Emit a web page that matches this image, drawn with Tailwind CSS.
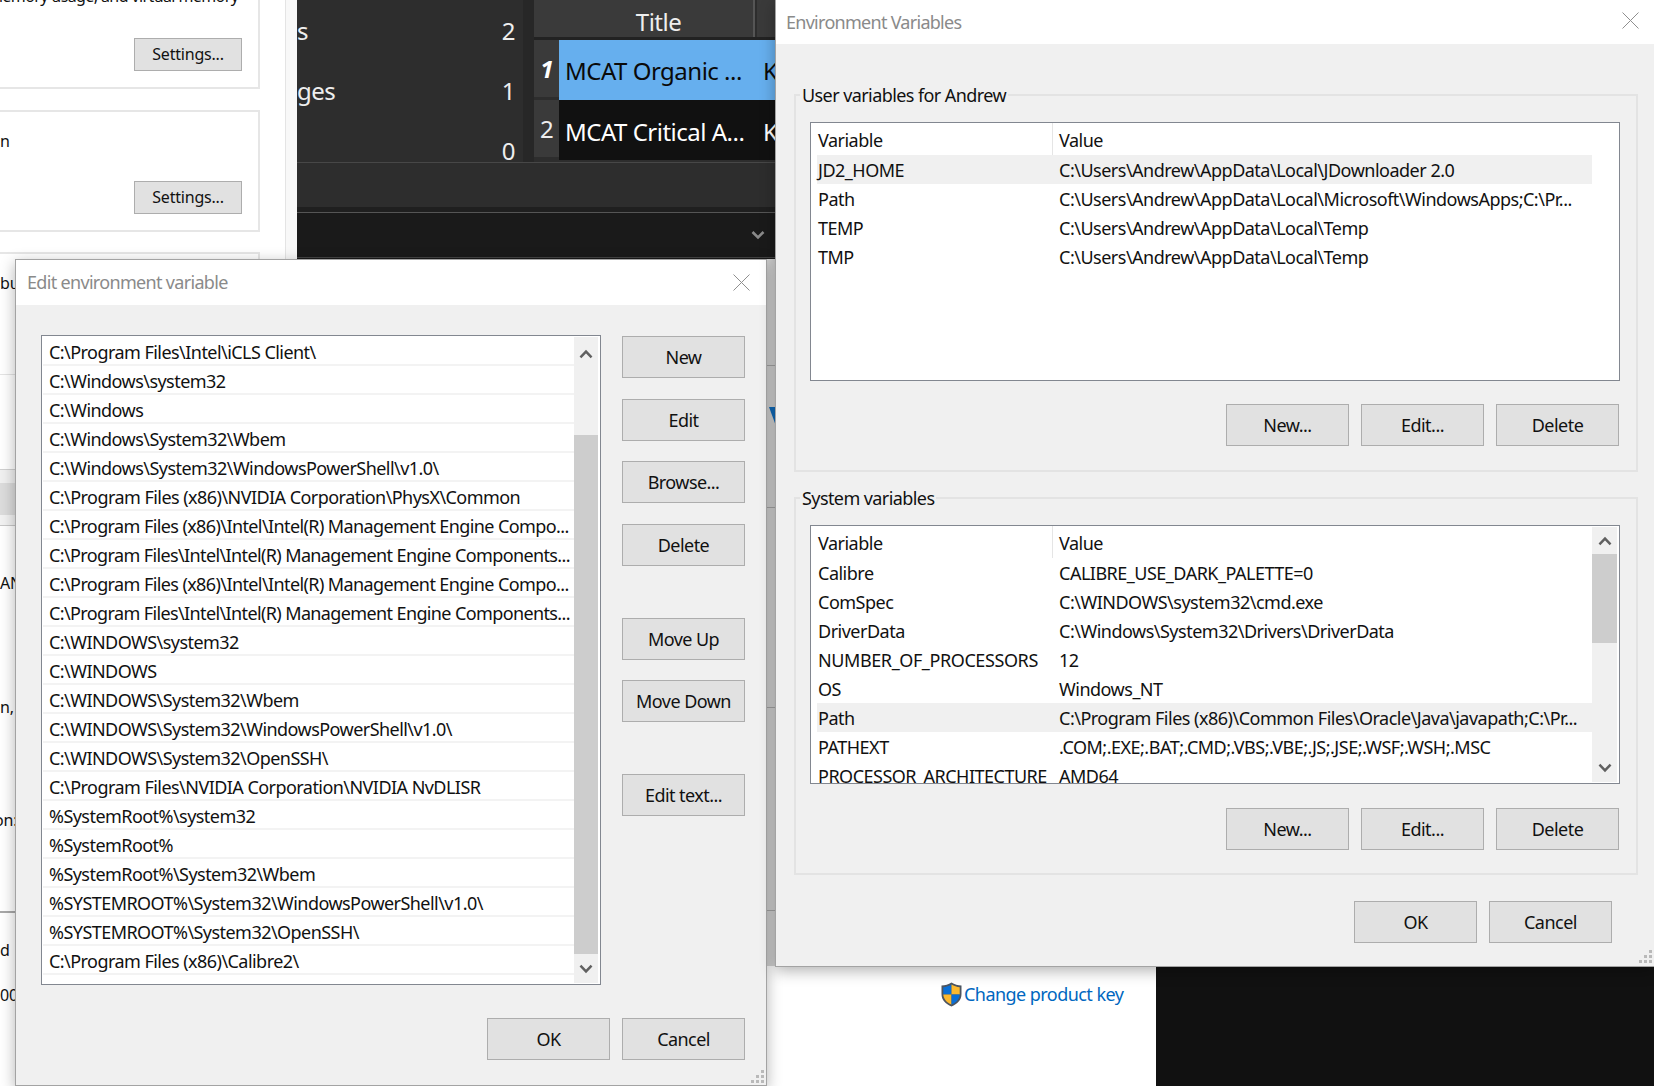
<!DOCTYPE html>
<html>
<head>
<meta charset="utf-8">
<script src="https://cdn.jsdelivr.net/npm/@tailwindcss/browser@4"></script>
</head>
<body class="m-0">
<div class="relative w-[1654px] h-[1086px] overflow-hidden bg-white font-['Noto_Sans',sans-serif] text-[18px] leading-[29px] tracking-[-0.55px] text-[#111]">

  <!-- Background: system settings window, left -->
  <div class="absolute left-0 top-0 w-[297px] h-[1086px] flex flex-col overflow-hidden bg-[#f8f8f8] text-[16px] tracking-[-0.2px]">
    <div class="w-[286px] h-full bg-white border-r border-[#e4e4e4] flex flex-col">
      <div class="w-[260px] h-[89px] border-r-2 border-b-2 border-[#e6e6e6] overflow-hidden flex flex-col items-end">
        <p class="self-start h-[20px] -mt-[16px] mb-[34px] -ml-[12px] whitespace-nowrap leading-[24px] tracking-[-0.6px]">memory usage, and virtual memory</p>
        <button class="w-[108px] h-[33px] mr-[16px] bg-[#e1e1e1] border border-[#adadad]">Settings...</button>
      </div>
      <div class="w-[260px] h-[122px] mt-[21px] border-t-2 border-r-2 border-b-2 border-[#e6e6e6] flex flex-col items-end">
        <p class="self-start mt-[17px] leading-[24px]">n</p>
        <button class="w-[108px] h-[33px] mr-[16px] mt-[28px] bg-[#e1e1e1] border border-[#adadad]">Settings...</button>
      </div>
      <div class="w-[260px] h-[123px] mt-[20px] border-t-2 border-r-2 border-[#e6e6e6] border-b border-b-[#e4e4e4] pt-[17px]">
        <p class="leading-[24px]">bu</p>
      </div>
      <div class="mt-[94px] h-[14px] bg-[#f0f0f0] border-t border-[#d0d0d0]"></div>
      <div class="h-[32px] bg-[#dcdcdc]"></div>
      <div class="h-[11px] bg-[#f2f2f2] border-b border-[#c8c8c8]"></div>
      <p class="mt-[45px] h-[24px] leading-[24px]">AN</p>
      <p class="mt-[100px] h-[24px] leading-[24px]">n,</p>
      <p class="mt-[89px] h-[24px] -ml-[6px] leading-[24px]">on:</p>
      <div class="mt-[79px] h-[2px] bg-[#a8a8a8]"></div>
      <p class="mt-[25px] h-[24px] leading-[24px]">d</p>
      <p class="mt-[21px] h-[24px] leading-[24px]">000</p>
    </div>
  </div>

  <!-- Background: dark library window -->
  <div class="absolute left-[297px] top-0 w-[478px] h-[259px] bg-[#1a1a1a] overflow-hidden flex flex-col text-[24px] tracking-[-0.5px] text-[#eee]">
    <div class="h-[163px] flex bg-[#2d2d2d] border-b border-[#474747] overflow-hidden shrink-0">
      <div class="w-[226px] pr-[8px] shrink-0">
        <div class="h-[60px] flex items-center justify-between"><span>s</span><span>2</span></div>
        <div class="h-[60px] flex items-center justify-between"><span>ges</span><span>1</span></div>
        <div class="h-[60px] flex items-center justify-end"><span>0</span></div>
      </div>
      <div class="w-[11px] bg-[#272727] shrink-0"></div>
      <div class="w-[241px] shrink-0 flex flex-col">
        <div class="h-[37px] flex shrink-0">
          <div class="w-[221px] h-full bg-[#3a3a3a] border-r-2 border-[#555] text-center leading-[44px] pl-[30px]">Title</div>
          <div class="flex-1 ml-[2px] bg-[#3a3a3a]"></div>
        </div>
        <div class="h-[3px] bg-[#222] shrink-0"></div>
        <div class="h-[60px] flex shrink-0">
          <div class="w-[25px] h-[57px] bg-[#3a3a3a] flex items-center justify-center font-bold italic text-white">1</div>
          <div class="flex-1 bg-[#66afee] text-[#0a0a0a] flex items-center pl-[6px] pt-[1px] whitespace-nowrap overflow-hidden"><span class="w-[198px] shrink-0">MCAT Organic ...</span><span>K</span></div>
        </div>
        <div class="h-[60px] flex shrink-0">
          <div class="w-[25px] h-[57px] bg-[#3a3a3a] flex items-center justify-center text-[#eee]">2</div>
          <div class="flex-1 bg-[#111] text-white flex items-center pl-[6px] pt-[2px] whitespace-nowrap overflow-hidden"><span class="w-[198px] shrink-0">MCAT Critical A...</span><span>K</span></div>
        </div>
      </div>
    </div>
    <div class="h-[44px] bg-[#2d2d2d] shrink-0"></div>
    <div class="h-[5px] bg-[#1f1f1f] shrink-0"></div>
    <div class="h-[46px] bg-[#1a1a1a] border-t border-[#555] border-b border-b-[#444] flex items-center justify-end pr-[10px] shrink-0">
      <svg class="w-[14px] h-[10px]" viewBox="0 0 14 10" fill="none" stroke="#8a8a8a" stroke-width="2.6"><path d="M1.5 2 7 7.5 12.5 2"/></svg>
    </div>
  </div>

  <!-- Strip of another window, between the two dialogs -->
  <div class="absolute left-[767px] top-[259px] w-[9px] h-[707px] bg-[#d6d6d6] flex flex-col">
    <div class="mt-[106px] h-[1px] bg-[#a8a8a8]"></div>
    <svg class="ml-[2px] mt-[41px] w-[7px] h-[19px]" viewBox="0 0 7 19"><path d="M0 0H7V19Z" fill="#0f6cbd"/></svg>
    <div class="mt-[81px] h-[1px] bg-[#a8a8a8]"></div>
    <div class="mt-[199px] h-[1px] bg-[#a8a8a8]"></div>
    <div class="mt-[202px] h-[1px] bg-[#a8a8a8]"></div>
  </div>

  <!-- Bottom right: black area and product key link -->
  <div class="absolute left-[1156px] top-[966px] w-[498px] h-[120px] bg-[#111]"></div>
  <div class="absolute left-[940px] top-[980px] flex items-center gap-[1px] text-[#0067c0]">
    <svg class="w-[23px] h-[25px]" viewBox="0 0 22 25">
      <path d="M11 .5C8 2.500 4.500 3.500 1 3.500V12c0 6 4 10 10 12.500C17 22 21 18 21 12V3.500C17.500 3.500 14 2.500 11 .5Z" fill="#4d5560"/>
      <path d="M11 2.500C8.500 4 5.500 5 2.800 5.200V12.500H11Z" fill="#0a6fd6"/>
      <path d="M11 2.500C13.500 4 16.500 5 19.200 5.200V12.500H11Z" fill="#fdb92e"/>
      <path d="M2.800 12.500H11V22.500C6 20.500 3.200 17 2.800 12.500Z" fill="#fdb92e"/>
      <path d="M19.200 12.500H11V22.500C16 20.500 18.800 17 19.200 12.500Z" fill="#0a6fd6"/>
    </svg>
    <span class="whitespace-nowrap">Change product key</span>
  </div>

  <!-- Edit environment variable dialog -->
  <div class="absolute left-[15px] top-[259px] w-[752px] h-[827px] flex flex-col bg-[#f0f0f0] border border-[#a3a3a3] shadow-[0_4px_14px_rgba(0,0,0,0.3)]">
    <div class="h-[45px] bg-white shrink-0 flex items-center justify-between pl-[11px] pr-[16px] text-[#8a8a8a] tracking-[-0.68px]">
      <span>Edit environment variable</span>
      <svg class="w-[17px] h-[17px]" viewBox="0 0 17 17" fill="none" stroke="#8f8f8f" stroke-width="1"><path d="M.5.500 16.500 16.500M16.500.500 .5 16.500"/></svg>
    </div>
    <div class="relative flex-1 flex flex-col pt-[30px] pl-[25px]">
      <div class="flex gap-[21px]">
        <div class="w-[560px] h-[650px] bg-white border border-[#828790] flex overflow-hidden pl-[1px] pt-[1px]">
          <div class="flex-1 min-w-0 flex flex-col whitespace-nowrap leading-[31px]">
            <div class="h-[29px] shrink-0 border-b-2 border-[#f3f3f3] pl-[6px]">C:\Program Files\Intel\iCLS Client\</div>
            <div class="h-[29px] shrink-0 border-b-2 border-[#f3f3f3] pl-[6px]">C:\Windows\system32</div>
            <div class="h-[29px] shrink-0 border-b-2 border-[#f3f3f3] pl-[6px]">C:\Windows</div>
            <div class="h-[29px] shrink-0 border-b-2 border-[#f3f3f3] pl-[6px]">C:\Windows\System32\Wbem</div>
            <div class="h-[29px] shrink-0 border-b-2 border-[#f3f3f3] pl-[6px]">C:\Windows\System32\WindowsPowerShell\v1.0\</div>
            <div class="h-[29px] shrink-0 border-b-2 border-[#f3f3f3] pl-[6px]">C:\Program Files (x86)\NVIDIA Corporation\PhysX\Common</div>
            <div class="h-[29px] shrink-0 border-b-2 border-[#f3f3f3] pl-[6px] tracking-[-0.6px]">C:\Program Files (x86)\Intel\Intel(R) Management Engine Compo...</div>
            <div class="h-[29px] shrink-0 border-b-2 border-[#f3f3f3] pl-[6px] tracking-[-0.62px]">C:\Program Files\Intel\Intel(R) Management Engine Components...</div>
            <div class="h-[29px] shrink-0 border-b-2 border-[#f3f3f3] pl-[6px] tracking-[-0.6px]">C:\Program Files (x86)\Intel\Intel(R) Management Engine Compo...</div>
            <div class="h-[29px] shrink-0 border-b-2 border-[#f3f3f3] pl-[6px] tracking-[-0.62px]">C:\Program Files\Intel\Intel(R) Management Engine Components...</div>
            <div class="h-[29px] shrink-0 border-b-2 border-[#f3f3f3] pl-[6px]">C:\WINDOWS\system32</div>
            <div class="h-[29px] shrink-0 border-b-2 border-[#f3f3f3] pl-[6px]">C:\WINDOWS</div>
            <div class="h-[29px] shrink-0 border-b-2 border-[#f3f3f3] pl-[6px]">C:\WINDOWS\System32\Wbem</div>
            <div class="h-[29px] shrink-0 border-b-2 border-[#f3f3f3] pl-[6px]">C:\WINDOWS\System32\WindowsPowerShell\v1.0\</div>
            <div class="h-[29px] shrink-0 border-b-2 border-[#f3f3f3] pl-[6px]">C:\WINDOWS\System32\OpenSSH\</div>
            <div class="h-[29px] shrink-0 border-b-2 border-[#f3f3f3] pl-[6px]">C:\Program Files\NVIDIA Corporation\NVIDIA NvDLISR</div>
            <div class="h-[29px] shrink-0 border-b-2 border-[#f3f3f3] pl-[6px]">%SystemRoot%\system32</div>
            <div class="h-[29px] shrink-0 border-b-2 border-[#f3f3f3] pl-[6px]">%SystemRoot%</div>
            <div class="h-[29px] shrink-0 border-b-2 border-[#f3f3f3] pl-[6px]">%SystemRoot%\System32\Wbem</div>
            <div class="h-[29px] shrink-0 border-b-2 border-[#f3f3f3] pl-[6px]">%SYSTEMROOT%\System32\WindowsPowerShell\v1.0\</div>
            <div class="h-[29px] shrink-0 border-b-2 border-[#f3f3f3] pl-[6px]">%SYSTEMROOT%\System32\OpenSSH\</div>
            <div class="h-[29px] shrink-0 border-b-2 border-[#f3f3f3] pl-[6px]">C:\Program Files (x86)\Calibre2\</div>
          </div>
          <div class="w-[24px] shrink-0 mr-[2px] mb-[1px] bg-[#f0f0f0] flex flex-col">
            <div class="h-[33px] flex items-center justify-center shrink-0">
              <svg class="w-[14px] h-[10px]" viewBox="0 0 12 9" fill="none" stroke="#606060" stroke-width="2.2"><path d="M1 7.500 6 2.300 11 7.500"/></svg>
            </div>
            <div class="h-[65px] shrink-0"></div>
            <div class="flex-1 bg-[#cdcdcd]"></div>
            <div class="h-[29px] flex items-center justify-center shrink-0">
              <svg class="w-[14px] h-[10px]" viewBox="0 0 12 9" fill="none" stroke="#606060" stroke-width="2.2"><path d="M1 1.500 6 6.700 11 1.500"/></svg>
            </div>
          </div>
        </div>
        <div class="w-[123px] flex flex-col shrink-0 pt-[1px]">
          <button class="h-[42px] bg-[#e1e1e1] border border-[#adadad]">New</button>
          <button class="h-[42px] mt-[21px] bg-[#e1e1e1] border border-[#adadad]">Edit</button>
          <button class="h-[42px] mt-[20px] bg-[#e1e1e1] border border-[#adadad]">Browse...</button>
          <button class="h-[42px] mt-[21px] bg-[#e1e1e1] border border-[#adadad]">Delete</button>
          <button class="h-[42px] mt-[52px] bg-[#e1e1e1] border border-[#adadad]">Move Up</button>
          <button class="h-[42px] mt-[20px] bg-[#e1e1e1] border border-[#adadad]">Move Down</button>
          <button class="h-[42px] mt-[52px] bg-[#e1e1e1] border border-[#adadad]">Edit text...</button>
        </div>
      </div>
      <div class="flex gap-[12px] mt-[33px] pl-[446px]">
        <button class="w-[123px] h-[42px] bg-[#e1e1e1] border border-[#adadad]">OK</button>
        <button class="w-[123px] h-[42px] bg-[#e1e1e1] border border-[#adadad]">Cancel</button>
      </div>
      <svg class="absolute right-[1px] bottom-[1px] w-[14px] h-[14px]" viewBox="0 0 14 14" fill="#b9b9b9"><rect x="10" y="0" width="3" height="3"/><rect x="5" y="5" width="3" height="3"/><rect x="10" y="5" width="3" height="3"/><rect x="0" y="10" width="3" height="3"/><rect x="5" y="10" width="3" height="3"/><rect x="10" y="10" width="3" height="3"/></svg>
    </div>
  </div>

  <!-- Environment Variables dialog -->
  <div class="absolute left-[775px] top-0 w-[879px] h-[967px] flex flex-col bg-[#f0f0f0] border-l border-b border-[#a3a3a3] shadow-[0_4px_14px_rgba(0,0,0,0.3)]">
    <div class="h-[44px] bg-white shrink-0 flex items-center justify-between pl-[10px] pr-[15px] text-[#8a8a8a] tracking-[-0.72px]">
      <span>Environment Variables</span>
      <svg class="w-[17px] h-[17px] -mt-[3px]" viewBox="0 0 17 17" fill="none" stroke="#8f8f8f" stroke-width="1"><path d="M.5.500 16.500 16.500M16.500.500 .5 16.500"/></svg>
    </div>
    <div class="relative flex-1 flex flex-col pt-[50px] pl-[18px] pr-[16px] tracking-[-0.5px]">
      <!-- User variables -->
      <div class="relative h-[378px] border-2 border-[#e3e3e3] pt-[26px] pl-[14px]">
        <span class="absolute left-[4px] -top-[15px] bg-[#f0f0f0] px-[2px] tracking-[-0.58px]">User variables for Andrew</span>
        <div class="w-[810px] h-[259px] bg-white border border-[#828790] flex flex-col pl-[6px] whitespace-nowrap overflow-hidden">
          <div class="w-[775px] h-[32px] flex shrink-0 items-end">
            <div class="w-[236px] pl-[1px] h-full leading-[34px] border-r border-[#e5e5e5]">Variable</div>
            <div class="pl-[6px] h-full leading-[34px]">Value</div>
          </div>
          <div class="w-[775px] h-[29px] flex shrink-0 leading-[31px] bg-[#f0f0f0]"><div class="w-[236px] pl-[1px]">JD2_HOME</div><div class="pl-[6px]">C:\Users\Andrew\AppData\Local\JDownloader 2.0</div></div>
          <div class="w-[775px] h-[29px] flex shrink-0 leading-[31px]"><div class="w-[236px] pl-[1px]">Path</div><div class="pl-[6px]">C:\Users\Andrew\AppData\Local\Microsoft\WindowsApps;C:\Pr...</div></div>
          <div class="w-[775px] h-[29px] flex shrink-0 leading-[31px]"><div class="w-[236px] pl-[1px]">TEMP</div><div class="pl-[6px]">C:\Users\Andrew\AppData\Local\Temp</div></div>
          <div class="w-[775px] h-[29px] flex shrink-0 leading-[31px]"><div class="w-[236px] pl-[1px]">TMP</div><div class="pl-[6px]">C:\Users\Andrew\AppData\Local\Temp</div></div>
        </div>
        <div class="flex gap-[12px] mt-[23px] pl-[416px]">
          <button class="w-[123px] h-[42px] bg-[#e1e1e1] border border-[#adadad]">New...</button>
          <button class="w-[123px] h-[42px] bg-[#e1e1e1] border border-[#adadad]">Edit...</button>
          <button class="w-[123px] h-[42px] bg-[#e1e1e1] border border-[#adadad]">Delete</button>
        </div>
      </div>
      <!-- System variables -->
      <div class="relative h-[378px] mt-[25px] border-2 border-[#e3e3e3] pt-[26px] pl-[14px]">
        <span class="absolute left-[4px] -top-[15px] bg-[#f0f0f0] px-[2px] tracking-[-0.58px]">System variables</span>
        <div class="w-[810px] h-[259px] bg-white border border-[#828790] flex pl-[6px] whitespace-nowrap overflow-hidden">
          <div class="w-[775px] shrink-0 flex flex-col">
            <div class="h-[32px] flex shrink-0">
              <div class="w-[236px] pl-[1px] h-full leading-[34px] border-r border-[#e5e5e5]">Variable</div>
              <div class="pl-[6px] h-full leading-[34px]">Value</div>
            </div>
            <div class="h-[29px] flex shrink-0 leading-[31px]"><div class="w-[236px] pl-[1px]">Calibre</div><div class="pl-[6px]">CALIBRE_USE_DARK_PALETTE=0</div></div>
            <div class="h-[29px] flex shrink-0 leading-[31px]"><div class="w-[236px] pl-[1px]">ComSpec</div><div class="pl-[6px]">C:\WINDOWS\system32\cmd.exe</div></div>
            <div class="h-[29px] flex shrink-0 leading-[31px]"><div class="w-[236px] pl-[1px]">DriverData</div><div class="pl-[6px]">C:\Windows\System32\Drivers\DriverData</div></div>
            <div class="h-[29px] flex shrink-0 leading-[31px]"><div class="w-[236px] pl-[1px] tracking-[-0.4px]">NUMBER_OF_PROCESSORS</div><div class="pl-[6px]">12</div></div>
            <div class="h-[29px] flex shrink-0 leading-[31px]"><div class="w-[236px] pl-[1px]">OS</div><div class="pl-[6px]">Windows_NT</div></div>
            <div class="h-[29px] flex shrink-0 leading-[31px] bg-[#f0f0f0]"><div class="w-[236px] pl-[1px]">Path</div><div class="pl-[6px]">C:\Program Files (x86)\Common Files\Oracle\Java\javapath;C:\Pr...</div></div>
            <div class="h-[29px] flex shrink-0 leading-[31px]"><div class="w-[236px] pl-[1px]">PATHEXT</div><div class="pl-[6px]">.COM;.EXE;.BAT;.CMD;.VBS;.VBE;.JS;.JSE;.WSF;.WSH;.MSC</div></div>
            <div class="h-[29px] flex shrink-0 leading-[31px]"><div class="w-[236px] pl-[1px]">PROCESSOR_ARCHITECTURE</div><div class="pl-[6px]">AMD64</div></div>
          </div>
          <div class="w-[25px] shrink-0 mt-[1px] mb-[1px] bg-[#f0f0f0] flex flex-col">
            <div class="h-[27px] flex items-center justify-center shrink-0">
              <svg class="w-[14px] h-[10px]" viewBox="0 0 12 9" fill="none" stroke="#606060" stroke-width="2.2"><path d="M1 7.500 6 2.300 11 7.500"/></svg>
            </div>
            <div class="h-[89px] bg-[#cdcdcd] shrink-0"></div>
            <div class="flex-1"></div>
            <div class="h-[28px] flex items-center justify-center shrink-0">
              <svg class="w-[14px] h-[10px]" viewBox="0 0 12 9" fill="none" stroke="#606060" stroke-width="2.2"><path d="M1 1.500 6 6.700 11 1.500"/></svg>
            </div>
          </div>
        </div>
        <div class="flex gap-[12px] mt-[24px] pl-[416px]">
          <button class="w-[123px] h-[42px] bg-[#e1e1e1] border border-[#adadad]">New...</button>
          <button class="w-[123px] h-[42px] bg-[#e1e1e1] border border-[#adadad]">Edit...</button>
          <button class="w-[123px] h-[42px] bg-[#e1e1e1] border border-[#adadad]">Delete</button>
        </div>
      </div>
      <div class="flex gap-[12px] mt-[26px] justify-end pr-[26px]">
        <button class="w-[123px] h-[42px] bg-[#e1e1e1] border border-[#adadad]">OK</button>
        <button class="w-[123px] h-[42px] bg-[#e1e1e1] border border-[#adadad]">Cancel</button>
      </div>
      <svg class="absolute right-[1px] bottom-[2px] w-[14px] h-[14px]" viewBox="0 0 14 14" fill="#b9b9b9"><rect x="10" y="0" width="3" height="3"/><rect x="5" y="5" width="3" height="3"/><rect x="10" y="5" width="3" height="3"/><rect x="0" y="10" width="3" height="3"/><rect x="5" y="10" width="3" height="3"/><rect x="10" y="10" width="3" height="3"/></svg>
    </div>
  </div>
</div>
</body>
</html>
